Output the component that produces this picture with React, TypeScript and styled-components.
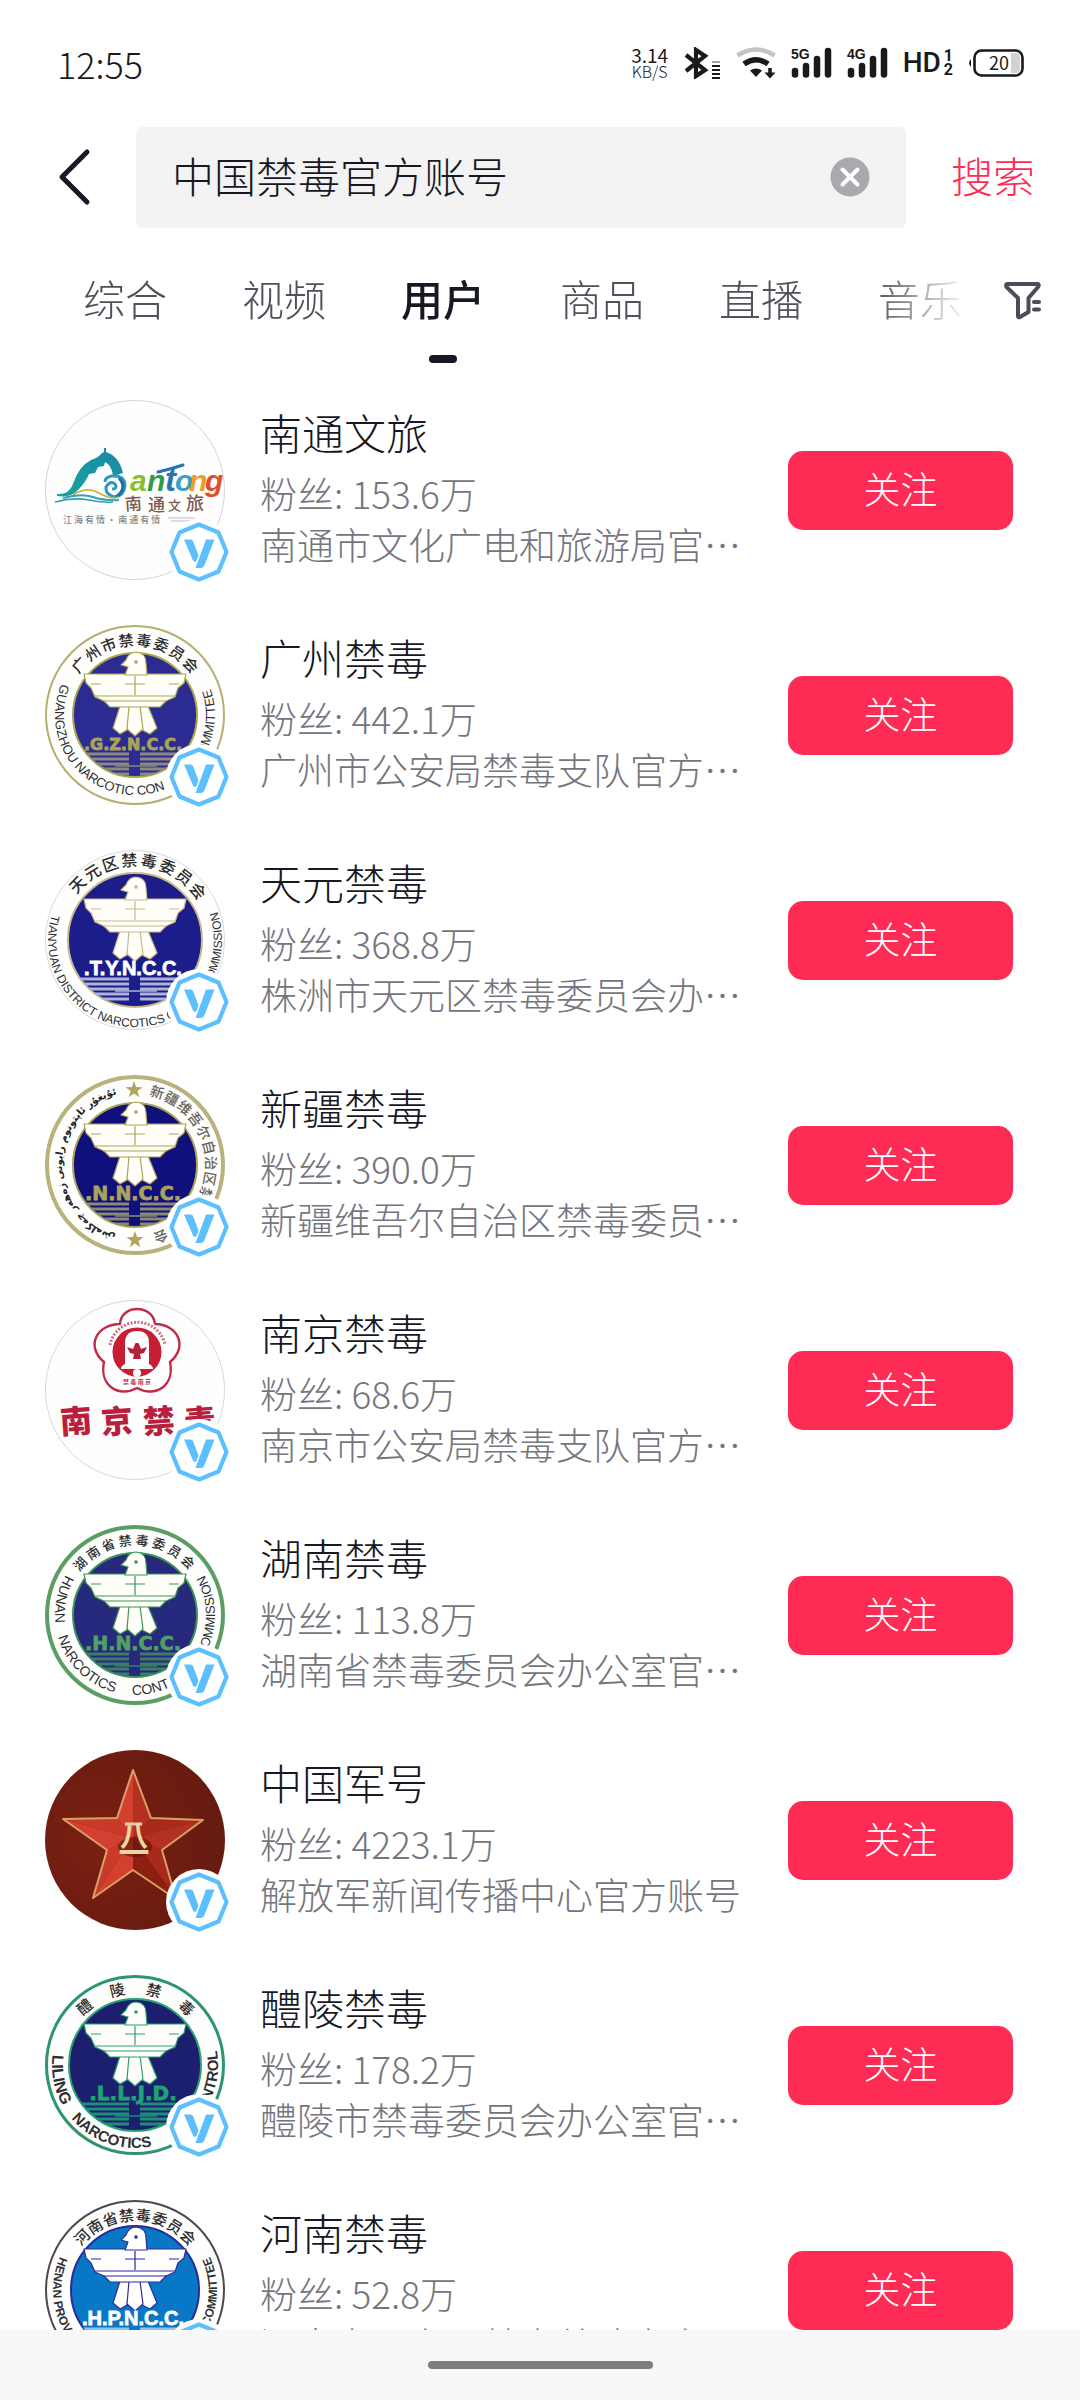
import React, { useState } from "react";
import styled, { createGlobalStyle } from "styled-components";

const sans = `"Noto Sans CJK SC", "Noto Sans", sans-serif`;
const latin = `"Liberation Sans", Arial, sans-serif`;
const wide = `"DejaVu Sans", sans-serif`;

const color = {
  ink: "#161823",
  tab: "#50515a",
  muted: "#75767d",
  red: "#fe2c55",
  field: "#f3f3f3",
  badge: "#5cbfff",
  system: "#1a1a1a",
};

const GlobalStyle = createGlobalStyle`
  * { box-sizing: border-box; }
  html, body, #root { height: 100%; }
  body {
    margin: 0;
    background: #fff;
    color: ${color.ink};
    font-family: ${sans};
    font-weight: 300;
  }
  button, input { font: inherit; color: inherit; border: 0; padding: 0; background: none; }
  button { cursor: pointer; }
`;

const Page = styled.div`
  display: flex;
  flex-direction: column;
  height: 100vh;
  overflow: hidden;
`;

/* ---------- system status bar ---------- */

const StatusBar = styled.header`
  display: flex;
  flex: none;
  align-items: center;
  justify-content: space-between;
  height: 127px;
  padding: 0 56px 2px 57px;
  color: ${color.system};
`;

const Clock = styled.time`
  font-size: 36px;
  line-height: 40px;
`;

const StatusIcons = styled.div`
  display: flex;
  align-items: center;
  gap: 15px;
`;

const Speed = styled.div`
  display: flex;
  flex-direction: column;
  align-items: center;
  width: 38px;
`;

const SpeedValue = styled.span`
  font-size: 19px;
  font-weight: 400;
  line-height: 16px;
`;

const SpeedUnit = styled.span`
  font-size: 16px;
  line-height: 16px;
`;

const Signal = ({ label }: { label: string }) => (
  <svg width="41" height="32" viewBox="0 0 41 32" aria-label={label}>
    <text x="0" y="12" fontFamily={latin} fontWeight="700" fontSize="14" fill={color.system}>{label}</text>
    {[[4, 24], [15, 19], [26, 12], [37, 4]].map(([x, y]) => (
      <line key={x} x1={x} x2={x} y1={y} y2="27.5" stroke={color.system} strokeWidth="6.5" strokeLinecap="round" />
    ))}
  </svg>
);

const HdLabel = styled.div`
  display: flex;
  align-items: center;
  gap: 3px;
  font-family: Roboto, "Liberation Sans", sans-serif;
  font-size: 28px;
  font-weight: 500;
  line-height: 32px;
`;

const HdSlots = styled.span`
  display: flex;
  flex-direction: column;
  font-size: 16px;
  font-weight: 700;
  line-height: 14px;
`;

const Status = () => (
  <StatusBar>
    <Clock>12:55</Clock>
    <StatusIcons>
      <Speed>
        <SpeedValue>3.14</SpeedValue>
        <SpeedUnit>KB/S</SpeedUnit>
      </Speed>
      <svg width="37" height="32" viewBox="0 0 37 32" aria-label="Bluetooth">
        <path d="M2 8 L21 23 L12 29 V3 L21 9 L2 24" fill="none" stroke={color.system} strokeWidth="4.2" strokeLinejoin="miter" />
        {[15, 19, 23, 27, 31].map((y, i) => (
          <line key={y} x1="28" x2="36" y1={y} y2={y} stroke={color.system} strokeWidth="2" opacity={i === 0 ? 0.4 : 1} />
        ))}
      </svg>
      <svg width="40" height="32" viewBox="0 0 40 32" aria-label="Wi-Fi">
        <path d="M1.500 8.500 Q20 -3.500 38.500 8.500" fill="none" stroke="#c4c4c4" strokeWidth="4.500" />
        <path d="M8 17 Q20 8.500 32 17" fill="none" stroke={color.system} strokeWidth="5.500" />
        <path d="M14 23.500 Q20 19.500 26 23.500 L20 30 Z" fill={color.system} />
        <path d="M34 21 V27" stroke={color.system} strokeWidth="3.500" />
        <path d="M28.500 25.500 H39.500 L34 31.500 Z" fill={color.system} />
      </svg>
      <Signal label="5G" />
      <Signal label="4G" />
      <HdLabel>
        HD
        <HdSlots><span>1</span><span>2</span></HdSlots>
      </HdLabel>
      <svg width="56" height="30" viewBox="0 0 56 30" aria-label="20%">
        <path d="M3 11 Q-1 15 3 19 Z" fill={color.system} />
        <rect x="6.500" y="2.500" width="48" height="25" rx="7" fill="none" stroke={color.system} strokeWidth="2.600" />
        <path d="M43 5 H48 Q52 5 52 9 V21 Q52 25 48 25 H43 Z" fill="#d2d2d2" />
        <text x="31" y="22" textAnchor="middle" fontFamily={sans} fontWeight="400" fontSize="18" fill={color.system}>20</text>
      </svg>
    </StatusIcons>
  </StatusBar>
);

/* ---------- search ---------- */

const SearchBar = styled.form`
  display: flex;
  flex: none;
  align-items: stretch;
  height: 101px;
  padding-left: 36px;
`;

const BackButton = styled.button`
  display: flex;
  align-items: center;
  width: 100px;
  padding: 0 0 2px 20px;
`;

const Field = styled.label`
  display: flex;
  flex: 1;
  align-items: center;
  min-width: 0;
  padding: 0 36px 2px;
  border-radius: 6px;
  background: ${color.field};
`;

const FieldInput = styled.input`
  flex: 1;
  min-width: 0;
  height: 60px;
  padding-bottom: 4px;
  outline: none;
  font-size: 42px;
  line-height: 56px;
`;

const ClearButton = styled.button`
  display: flex;
`;

const SubmitButton = styled.button`
  width: 174px;
  padding-bottom: 6px;
  color: ${color.red};
  font-size: 42px;
`;

/* ---------- tabs ---------- */

const TabRow = styled.div`
  display: flex;
  flex: none;
  align-items: flex-start;
  padding: 39px 37px 15px 0;
`;

const TabStrip = styled.nav`
  display: flex;
  flex: 1;
  gap: 75px;
  min-width: 0;
  padding-left: 83px;
  overflow: hidden;
  mask-image: linear-gradient(to right, #000 calc(100% - 100px), transparent calc(100% - 4px));
`;

const Tab = styled.button<{ $active: boolean }>`
  display: flex;
  flex: none;
  flex-direction: column;
  align-items: center;
  gap: 26px;
  color: ${(p) => (p.$active ? color.ink : color.tab)};
  font-size: 42px;
  font-weight: ${(p) => (p.$active ? 500 : 300)};
  line-height: 62px;

  &::after {
    content: "";
    width: 28px;
    height: 8px;
    border-radius: 4px;
    background: ${(p) => (p.$active ? color.ink : "transparent")};
  }
`;

const FilterButton = styled.button`
  display: flex;
  align-items: center;
  justify-content: flex-end;
  width: 70px;
  height: 66px;
`;

/* ---------- results ---------- */

const Results = styled.ul`
  flex: 1;
  min-height: 0;
  margin: 0;
  padding: 0;
  overflow: hidden;
  list-style: none;
`;

const Row = styled.li`
  display: flex;
  align-items: center;
  padding: 22px 67px 23px 45px;
`;

const AvatarBox = styled.div`
  position: relative;
  flex: none;
  width: 180px;
  height: 180px;
`;

const BadgeIcon = styled.svg`
  position: absolute;
  right: -7px;
  bottom: -5px;
`;

const Info = styled.div`
  display: flex;
  flex: 1;
  flex-direction: column;
  min-width: 0;
  margin: 0 44px 0 35px;
  padding-bottom: 8px;
`;

const Name = styled.h2`
  margin: 0 0 6px;
  font-size: 42px;
  font-weight: 300;
  line-height: 60px;
`;

const Detail = styled.p`
  margin: 0;
  overflow: hidden;
  color: ${color.muted};
  font-size: 37px;
  line-height: 51px;
  text-overflow: ellipsis;
  white-space: nowrap;
`;

const FollowButton = styled.button`
  flex: none;
  width: 225px;
  height: 79px;
  padding-bottom: 4px;
  border-radius: 15px;
  background: ${color.red};
  color: #fff;
  font-size: 37px;
  font-weight: 300;
  line-height: 52px;
`;

const HomeArea = styled.footer`
  display: flex;
  flex: none;
  align-items: center;
  justify-content: center;
  height: 70px;
  background: #f8f8f8;
`;

const HomeHandle = styled.div`
  width: 225px;
  height: 8px;
  border-radius: 4px;
  background: #7d7d7d;
`;

/* ---------- avatars (180 x 180 drawings) ---------- */

const Badge = () => (
  <BadgeIcon width="66" height="66" viewBox="0 0 66 66" aria-label="认证">
    <circle cx="33" cy="33" r="33" fill="#fff" />
    <path
      d="M33 5.500 L52.500 13.500 L60.500 33 L52.500 52.500 L33 60.500 L13.500 52.500 L5.500 33 L13.500 13.500 Z"
      fill="#fff"
      stroke={color.badge}
      strokeWidth="4.200"
      strokeLinejoin="round"
    />
    <path d="M18 20.500 H24.500 Q26.500 20.500 27 22 L32.500 36.500 L30.500 42 Q28.500 44 27 41.500 Z" fill={color.badge} />
    <path d="M40 20.500 H48.500 L38.500 46 Q37.500 49 34.500 49 H29.500 Z" fill={color.badge} />
  </BadgeIcon>
);

const polar = (r: number, deg: number) => {
  const a = (deg * Math.PI) / 180;
  return [90 + r * Math.sin(a), 90 - r * Math.cos(a)];
};

/* Characters spread evenly on a circle; angles run clockwise from the top. */
const RingChars = ({ text, r, from, to, size, fill = "#2b2b2b" }: {
  text: string; r: number; from: number; to: number; size: number; fill?: string;
}) => (
  <g fontFamily={sans} fontWeight="500" fontSize={size} fill={fill} textAnchor="middle">
    {Array.from(text).map((c, i, all) => {
      const angle = from + ((to - from) * i) / (all.length - 1);
      return (
        <text key={i} x="90" y={90 - r + size * 0.38} transform={`rotate(${angle} 90 90)`}>{c}</text>
      );
    })}
  </g>
);

/* Latin lettering that runs round the lower rim, heads towards the centre. */
type Arc = { text: string; at: number; end?: boolean; size: number; weight?: number };

const RimText = ({ id, arc, r, fill }: { id: string; arc: Arc; r: number; fill: string }) => {
  const [start, stop] = arc.end ? [arc.at + 110, arc.at] : [arc.at, arc.at - 170];
  const [x1, y1] = polar(r, start);
  const [x2, y2] = polar(r, stop);
  return (
    <>
      <path id={id} d={`M${x1} ${y1} A${r} ${r} 0 0 0 ${x2} ${y2}`} fill="none" />
      <text fontFamily={latin} fontSize={arc.size} fontWeight={arc.weight ?? 400} fill={fill}
        textAnchor={arc.end ? "end" : "start"}>
        <textPath href={`#${id}`} startOffset={arc.end ? "100%" : "0%"}>{arc.text}</textPath>
      </text>
    </>
  );
};

type EmblemSpec = {
  id: string;
  rim: string;
  rimWidth: number;
  disc: string;
  discR: number;
  line: string;
  bird?: string;
  letters: string;
  lettersFill: string;
  lettersSize: number;
  lettersFont?: string;
  wave: string;
  title?: { text: string; r: number; from: number; to: number; size: number };
  arcs?: Arc[];
  arcR?: number;
  children?: React.ReactNode;
};

const Emblem = (p: EmblemSpec) => (
  <svg width="180" height="180" viewBox="0 0 180 180" role="img">
    <defs>
      <clipPath id={`${p.id}-disc`}><circle cx="90" cy="90" r={p.discR} /></clipPath>
    </defs>
    <circle cx="90" cy="90" r={90 - p.rimWidth / 2} fill="#fefefc" stroke={p.rim} strokeWidth={p.rimWidth} />
    <circle cx="90" cy="90" r={p.discR} fill={p.disc} stroke={p.line} strokeWidth="2" />
    <g clipPath={`url(#${p.id}-disc)`}>
      {[129, 134, 139, 144, 149].map((y) => (
        <g key={y} stroke={p.wave} strokeWidth="3.200">
          <line x1="20" x2="84" y1={y} y2={y} />
          <line x1="95" x2="160" y1={y} y2={y} />
        </g>
      ))}
      <line x1="70" x2="112" y1="141" y2="141" stroke={p.wave} strokeWidth="1.500" />
    </g>
    <g fill={p.bird ?? "#fffef8"} stroke={p.line} strokeWidth="1.200" strokeLinejoin="round">
      <path d="M75 81 L68 103 L75 109 L82 105 L86 81 Z" />
      <path d="M103 81 L112 103 L105 109 L97 105 L93 81 Z" />
      <path d="M84 81 L82 104 L90 111 L98 104 L95 81 Z" />
      <path d="M39 49 H141 L139 58 L133 63 L130 72 L121 76 L115 82 H65 L59 76 L50 72 L46 63 L41 58 Z" />
      <path d="M80 50 L83 42 L76 40 L81 35 Q84 27 91 27 Q101 28 101 38 L102 50 Z" />
      <path d="M90 51 V70 M80 59 H100 M46 59 H56 M124 59 H134 M50 71 H130 M58 76 H122" fill="none" />
      <circle cx="91" cy="37" r="1.200" fill={p.line} />
    </g>
    <text x="88" y="125" textAnchor="middle" fontFamily={p.lettersFont ?? wide} fontWeight="700"
      fontSize={p.lettersSize} fill={p.lettersFill} stroke={p.lettersFill} strokeWidth="0.800">{p.letters}</text>
    {p.title && <RingChars {...p.title} />}
    {p.arcs?.map((arc, i) => (
      <RimText key={i} id={`${p.id}-arc${i}`} arc={arc} r={p.arcR ?? 80} fill="#2f2f33" />
    ))}
    {p.children}
  </svg>
);

const Star = ({ cx, cy, r, fill }: { cx: number; cy: number; r: number; fill: string }) => {
  const pts = Array.from({ length: 10 }, (_, i) => {
    const a = (i * Math.PI) / 5;
    const k = i % 2 ? r * 0.4 : r;
    return `${cx + k * Math.sin(a)},${cy - k * Math.cos(a)}`;
  }).join(" ");
  return <polygon points={pts} fill={fill} />;
};

const Nantong = () => (
  <svg width="180" height="180" viewBox="0 0 180 180" role="img">
    <defs>
      <clipPath id="nt-clip"><circle cx="90" cy="90" r="89" /></clipPath>
      <linearGradient id="nt-hill" x1="0" x2="1" y1="1" y2="0">
        <stop offset="0" stopColor="#17a59b" />
        <stop offset="1" stopColor="#1b87a8" />
      </linearGradient>
    </defs>
    <circle cx="90" cy="90" r="89.500" fill="#fefefe" stroke="#d5d5d5" />
    <g clipPath="url(#nt-clip)">
      <path d="M12 94 Q24 95 28 84 Q34 66 46 60 Q53 58 57 53 L59 52 V48 H61 V52 Q74 56 78 73 L68 76 Q67 68 63 64 L60 62 L59 66 L53 67 L50 73 L44 74 Q41 82 33 90 Q26 98 12 96 Z" fill="url(#nt-hill)" />
      <path d="M60 82 Q60 77 67 76 Q80 75 80 86 Q79 96 69 97 Q60 94 61 87 Q65 80 70 84 Q73 89 67 89" fill="none" stroke="#2f96bd" strokeWidth="3" />
      <path d="M74 78 Q83 88 71 97" fill="none" stroke="#1d6fa6" strokeWidth="3" />
      <path d="M28 95 Q42 86 54 93 T74 97" fill="none" stroke="#c6b54b" strokeWidth="1.800" />
      <path d="M18 98 Q36 93 48 97 T74 100" fill="none" stroke="#3a9cc0" strokeWidth="2" />
      <path d="M10 102 Q28 97 44 100 T68 102" fill="none" stroke="#2aa6a0" strokeWidth="1.600" />
      <g fontFamily={latin} fontStyle="italic" fontWeight="700" fontSize="30">
        <text x="85" y="91" fill="#8cbf2e">a</text>
        <text x="102" y="91" fill="#2e9c4c">n</text>
        <text x="120" y="91" fill="#2b73b5" fontSize="33">t</text>
        <text x="130" y="91" fill="#3c9fc4">o</text>
        <text x="144" y="91" fill="#f09a2a">n</text>
        <text x="160" y="91" fill="#df5125">g</text>
      </g>
      <path d="M113 72 Q126 69 138 65" fill="none" stroke="#2b73b5" strokeWidth="3" strokeLinecap="round" />
      <g fontFamily={sans} fontWeight="500" fontSize="17" fill="#7c5a50">
        <text x="80" y="110" transform="rotate(-4 88 105)">南</text>
        <text x="103" y="111">通</text>
        <text x="123" y="110" fontSize="13">文</text>
        <text x="141" y="110" fontSize="18">旅</text>
      </g>
      <text x="18" y="123" fontFamily={sans} fontWeight="500" fontSize="9" fill="#858585">江 海 有 情 · 南 通 有 情</text>
      <path d="M123 118 H150 M126 121 H165" stroke="#bdbdbd" strokeWidth="1" />
    </g>
  </svg>
);

const Nanjing = () => (
  <svg width="180" height="180" viewBox="0 0 180 180" role="img">
    <circle cx="90" cy="90" r="89.500" fill="#fefefe" stroke="#d3dae0" />
    <path
      d="M75 24 C76 4 108 4 110 24 C132 24 144 46 125 62 C130 86 110 98 92 88 C74 98 54 86 59 62 C40 46 52 24 75 24 Z"
      fill="#fff" stroke="#c22a45" strokeWidth="2.400" strokeLinejoin="round"
    />
    <path d="M65 45 A28 28 0 0 1 120 45" fill="none" stroke="#d0707f" strokeWidth="3" strokeDasharray="2 1.500" />
    <circle cx="92" cy="52" r="24.500" fill="#c81e33" />
    <path d="M80 64 V43 Q80 31 92 31 Q104 31 104 43 V64 Q108 66 108 69 H76 Q76 66 80 64 Z" fill="#fff" />
    <circle cx="92" cy="73" r="4" fill="#fff" />
    <path d="M82 47 L88 49 L90.500 43 H93.500 L96 49 L102 47 L99 53 L95 54 L96 59 H88 L89 54 L85 53 Z" fill="#b3213a" />
    <text x="92" y="84" textAnchor="middle" fontFamily={sans} fontWeight="700" fontSize="6" fill="#c22a45">禁 毒 南 京</text>
    <g fontFamily={sans} fontWeight="900" fontSize="32" fill="#b81f3c" textAnchor="middle">
      <text x="31" y="133" transform="rotate(-4 31 122)">南</text>
      <text x="72" y="133" transform="rotate(-4 72 122)">京</text>
      <text x="114" y="133" transform="rotate(-4 114 122)">禁</text>
      <text x="155" y="133" transform="rotate(-4 155 122)">毒</text>
    </g>
  </svg>
);

const tips = [[88, 20], [158, 70], [131, 149], [48, 148], [18, 69]];
const dents = [[106, 68], [117, 100], [88, 120], [62, 100], [72, 68]];

const Military = () => (
  <svg width="180" height="180" viewBox="0 0 180 180" role="img">
    <defs>
      <radialGradient id="ml-bg" cx="0.3" cy="0.5" r="0.8">
        <stop offset="0" stopColor="#7a2012" />
        <stop offset="1" stopColor="#641a0f" />
      </radialGradient>
    </defs>
    <circle cx="90" cy="90" r="90" fill="url(#ml-bg)" />
    {tips.map(([x, y], i) => {
      const [ax, ay] = dents[(i + 4) % 5];
      const [bx, by] = dents[i];
      return (
        <g key={i}>
          <polygon points={`88,88 ${ax},${ay} ${x},${y}`} fill={i === 2 || i === 1 ? "#a82a1d" : "#d2402f"} />
          <polygon points={`88,88 ${x},${y} ${bx},${by}`} fill={i === 3 || i === 4 ? "#c93a2b" : i === 2 ? "#8c1e12" : "#b23122"} />
        </g>
      );
    })}
    <polygon
      points={tips.map((t, i) => `${t.join(",")} ${dents[i].join(",")}`).join(" ")}
      fill="none" stroke="#dba066" strokeWidth="2" strokeLinejoin="round"
    />
    <ellipse cx="90" cy="97" rx="17" ry="10" fill="#5a140b" opacity="0.6" />
    <path d="M80 74 H97" stroke="#f0d3a0" strokeWidth="3" />
    <g fontFamily={sans} fontWeight="700" fill="#f0d3a0" textAnchor="middle">
      <text x="89" y="97" fontSize="28">八</text>
      <text x="89" y="114" fontSize="31">一</text>
    </g>
  </svg>
);

const Guangzhou = () => (
  <Emblem id="gz" rim="#b5b070" rimWidth={2} disc="#2b2b92" discR={62} line="#aaa652" letters=".G.Z.N.C.C."
    lettersFill="#a9a35a" lettersSize={16} wave="#8a8880"
    title={{ text: "广州市禁毒委员会", r: 75, from: -48, to: 48, size: 15 }}
    arcs={[
      { text: "GUANGZHOU NARCOTIC CON", at: 293, size: 13 },
      { text: "COMMITTEE", at: 71, end: true, size: 13 },
    ]} />
);

const Tianyuan = () => (
  <Emblem id="ty" rim="#d9d9de" rimWidth={1} disc="#1b1d8a" discR={67} line="#c9b98a" letters=".T.Y.N.C.C."
    lettersFill="#ffffff" lettersSize={20} lettersFont={latin} wave="#aeb3d6"
    title={{ text: "天元区禁毒委员会", r: 80, from: -46, to: 52, size: 16 }}
    arcR={87}
    arcs={[
      { text: "TIANYUAN DISTRICT NARCOTICS C", at: 287, size: 12 },
      { text: "COMMISSION", at: 71, end: true, size: 12 },
    ]} />
);

const Xinjiang = () => (
  <Emblem id="xj" rim="#b8b27c" rimWidth={4} disc="#10107c" discR={62} line="#aaa45a" letters=".N.N.C.C."
    lettersFill="#aaa35c" lettersSize={19} wave="#8b8878">
    <Star cx={89} cy={15} r={9} fill="#b0a862" />
    <Star cx={90} cy={165} r={9} fill="#b0a862" />
    <RingChars text="新疆维吾尔自治区禁毒委员会" r={76} from={17} to={160} size={14} fill="#66625a" />
    <path id="xj-script" d={`M${polar(73, 196).join(" ")} A73 73 0 0 1 ${polar(73, 345).join(" ")}`} fill="none" />
    <text fontFamily={wide} fontWeight="700" fontSize="10" fill="#222" textAnchor="middle">
      <textPath href="#xj-script" startOffset="50%">ئۇيغۇر ئاپتونوم رايونى زەھەر چەكلەش</textPath>
    </text>
  </Emblem>
);

const Hunan = () => (
  <Emblem id="hn" rim="#5b9d62" rimWidth={4} disc="#26297c" discR={62} line="#3f9457" letters=".H.N.C.C."
    lettersFill="#4fa062" lettersSize={19} wave="#3c7d68"
    title={{ text: "湖南省禁毒委员会", r: 75, from: -47, to: 45, size: 13 }}
    arcs={[
      { text: "HUNAN", at: 300, size: 14 },
      { text: "NARCOTICS", at: 254, size: 14 },
      { text: "CONTROL", at: 182, size: 14 },
      { text: "OMMISSION", at: 60, end: true, size: 13 },
    ]} />
);

const Liling = () => (
  <Emblem id="ll" rim="#2d9670" rimWidth={3} disc="#1b1f6e" discR={66} line="#2aa274" letters=".L.L.J.D."
    lettersFill="#1fa274" lettersSize={20} wave="#1f8d78"
    title={{ text: "醴陵禁毒", r: 77, from: -41, to: 42, size: 15 }}
    arcR={83}
    arcs={[
      { text: "LILING", at: 277, size: 16, weight: 700 },
      { text: "NARCOTICS", at: 230, size: 15, weight: 700 },
      { text: "CONTROL", at: 80, end: true, size: 15, weight: 700 },
    ]} />
);

const Henan = () => (
  <Emblem id="he" rim="#4a4a50" rimWidth={2} disc="#0878c6" discR={64} line="#2b2a9a" letters=".H.P.N.C.C."
    lettersFill="#ffffff" lettersSize={20} lettersFont={latin} wave="#8fc4e6" bird="#ffffff"
    title={{ text: "河南省禁毒委员会", r: 75, from: -45, to: 45, size: 15 }}
    arcR={82}
    arcs={[
      { text: "HENAN PROVINCE NARCOTICS", at: 294, size: 12, weight: 700 },
      { text: "COMMITTEE", at: 66, end: true, size: 12, weight: 700 },
    ]} />
);

/* ---------- data ---------- */

const tabs = ["综合", "视频", "用户", "商品", "直播", "音乐"];

const accounts = [
  { name: "南通文旅", fans: "153.6万", about: "南通市文化广电和旅游局官方账号", Art: Nantong },
  { name: "广州禁毒", fans: "442.1万", about: "广州市公安局禁毒支队官方账号", Art: Guangzhou },
  { name: "天元禁毒", fans: "368.8万", about: "株洲市天元区禁毒委员会办公室官方账号", Art: Tianyuan },
  { name: "新疆禁毒", fans: "390.0万", about: "新疆维吾尔自治区禁毒委员会官方账号", Art: Xinjiang },
  { name: "南京禁毒", fans: "68.6万", about: "南京市公安局禁毒支队官方账号", Art: Nanjing },
  { name: "湖南禁毒", fans: "113.8万", about: "湖南省禁毒委员会办公室官方账号", Art: Hunan },
  { name: "中国军号", fans: "4223.1万", about: "解放军新闻传播中心官方账号", Art: Military },
  { name: "醴陵禁毒", fans: "178.2万", about: "醴陵市禁毒委员会办公室官方账号", Art: Liling },
  { name: "河南禁毒", fans: "52.8万", about: "河南省公安厅禁毒总队官方账号", Art: Henan },
];

export default function App() {
  const [query, setQuery] = useState("中国禁毒官方账号");
  const [active, setActive] = useState("用户");

  return (
    <Page lang="zh-CN">
      <GlobalStyle />
      <Status />
      <SearchBar role="search" onSubmit={(e) => e.preventDefault()}>
        <BackButton type="button" aria-label="返回">
          <svg width="36" height="60" viewBox="0 0 36 60">
            <path d="M31 5 L6 30 L31 55" fill="none" stroke={color.ink} strokeWidth="5" strokeLinecap="round" strokeLinejoin="round" />
          </svg>
        </BackButton>
        <Field>
          <FieldInput aria-label="搜索" value={query} onChange={(e) => setQuery(e.target.value)} />
          <ClearButton type="button" aria-label="清除" onClick={() => setQuery("")}>
            <svg width="40" height="40" viewBox="0 0 40 40">
              <circle cx="20" cy="20" r="19.500" fill="#a9a9b0" />
              <path d="M12.500 12.500 L27.500 27.500 M27.500 12.500 L12.500 27.500" stroke="#fff" strokeWidth="4" strokeLinecap="round" />
            </svg>
          </ClearButton>
        </Field>
        <SubmitButton type="submit">搜索</SubmitButton>
      </SearchBar>
      <TabRow>
        <TabStrip>
          {tabs.map((t) => (
            <Tab key={t} type="button" $active={t === active} onClick={() => setActive(t)}>{t}</Tab>
          ))}
        </TabStrip>
        <FilterButton type="button" aria-label="筛选">
          <svg width="40" height="40" viewBox="0 0 40 40">
            <path d="M4 4 H35 Q36.500 5 35 7 L25.500 18 V32 L17 37 Q15 38 15 36 V18 L3.500 7 Q2.500 5 4 4 Z"
              fill="none" stroke="#4b4d58" strokeWidth="4" strokeLinejoin="round" />
            <path d="M31 22 H36 M31 29.500 H36" stroke="#4b4d58" strokeWidth="4" strokeLinecap="round" />
          </svg>
        </FilterButton>
      </TabRow>
      <Results>
        {accounts.map(({ name, fans, about, Art }) => (
          <Row key={name}>
            <AvatarBox>
              <Art />
              <Badge />
            </AvatarBox>
            <Info>
              <Name>{name}</Name>
              <Detail>粉丝: {fans}</Detail>
              <Detail>{about}</Detail>
            </Info>
            <FollowButton type="button">关注</FollowButton>
          </Row>
        ))}
      </Results>
      <HomeArea>
        <HomeHandle />
      </HomeArea>
    </Page>
  );
}
